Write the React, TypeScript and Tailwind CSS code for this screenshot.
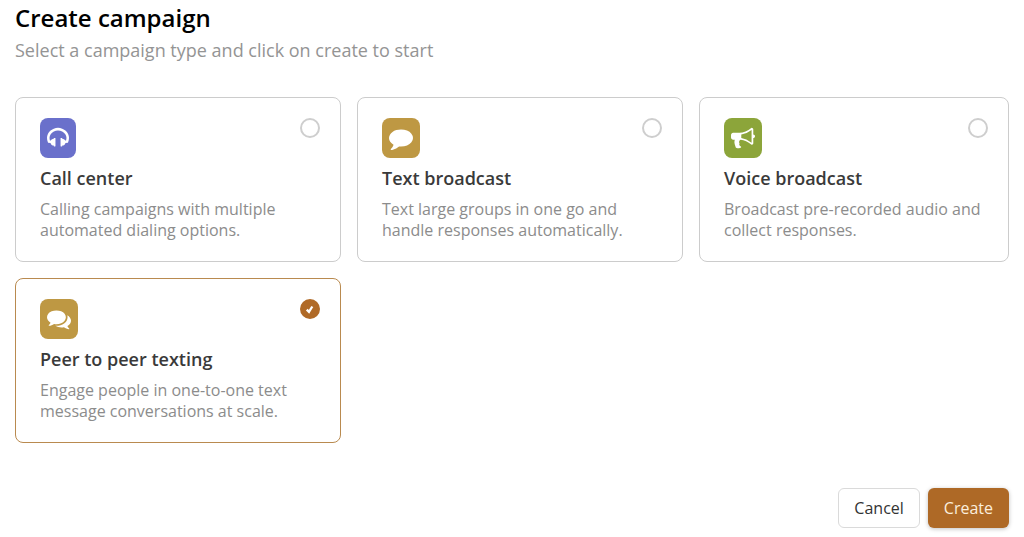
import { useState } from "react";

type Campaign = {
  id: string;
  title: string;
  text: string;
  tile: string;
  viewBox: string;
  glyph: string;
  icon: string;
};

const campaigns: Campaign[] = [
  {
    id: "call-center",
    title: "Call center",
    text: "Calling campaigns with multiple automated dialing options.",
    tile: "bg-[#6a70cb]",
    viewBox: "64 0 1664 1792",
    glyph: "w-[22px]",
    icon: "M1728 886q0 166-60 314l-20 49-185 33q-22 83-90.5 136.5t-156.5 53.5v32q0 14-9 23t-23 9h-64q-14 0-23-9t-9-23v-576q0-14 9-23t23-9h64q14 0 23 9t9 23v32q71 0 130 35.5t93 95.5l68-12q29-95 29-193 0-148-88-279t-236.5-209-315.5-78-315.5 78-236.5 209-88 279q0 98 29 193l68 12q34-60 93-95.5t130-35.5v-32q0-14 9-23t23-9h64q14 0 23 9t9 23v576q0 14-9 23t-23 9h-64q-14 0-23-9t-9-23v-32q-88 0-156.5-53.5t-90.5-136.5l-185-33-20-49q-60-148-60-314 0-151 67-291t179-242.5 266-163.5 320-61 320 61 266 163.5 179 242.5 67 291z",
  },
  {
    id: "text-broadcast",
    title: "Text broadcast",
    text: "Text large groups in one go and handle responses automatically.",
    tile: "bg-[#be9843]",
    viewBox: "0 0 1792 1792",
    glyph: "w-6",
    icon: "M1792 896q0 174-120 321.5t-326 233-450 85.5q-70 0-145-8-198 175-460 242-49 14-114 22-17 2-30.5-9t-17.5-29v-1q-3-4-.5-12t2-10 4.5-9.5l6-9 7-8.5 8-9q7-8 31-34.5t34.5-38 31-39.5 32.5-51 27-59 26-76q-157-89-247.5-220t-90.5-281q0-130 71-248.5t191-204.5 286-136.5 348-50.5q244 0 450 85.5t326 233 120 321.5z",
  },
  {
    id: "voice-broadcast",
    title: "Voice broadcast",
    text: "Broadcast pre-recorded audio and collect responses.",
    tile: "bg-[#8ca53a]",
    viewBox: "0 0 1792 1792",
    glyph: "w-6",
    icon: "M1664 640q53 0 90.5 37.5t37.5 90.5-37.5 90.5-90.5 37.5v384q0 52-38 90t-90 38q-417-347-812-380-58 19-91 66t-31 100.5 40 92.5q-20 33-23 65.5t6 58 33.5 55 48 50 61.5 50.5q-29 58-111.5 83t-168.5 11.5-132-55.5q-7-23-29.5-87.5t-32-94.5-23-89-15-101 3.5-98.5 22-110.5h-122q-66 0-113-47t-47-113v-192q0-66 47-113t113-47h480q435 0 896-384 52 0 90 38t38 90v384zm-128 604v-954q-394 302-768 343v270q377 42 768 341z",
  },
  {
    id: "peer-to-peer",
    title: "Peer to peer texting",
    text: "Engage people in one-to-one text message conversations at scale.",
    tile: "bg-[#be9843]",
    viewBox: "0 0 1792 1792",
    glyph: "w-6",
    icon: "M1408 768q0 139-94 257t-256.5 186.5-353.5 68.5q-86 0-176-16-124 88-278 128-36 9-86 16h-3q-11 0-20.5-8t-11.5-21q-1-3-1-6.5t.5-6.5 2-6l2.5-5 3.5-5.5 4-5 4.5-5 4-4.5q5-6 23-25t26-29.5 22.5-29 25-38.5 20.5-44q-124-72-195-177t-71-224q0-139 94-257t256.5-186.5 353.5-68.5 353.5 68.5 256.5 186.5 94 257zm384 256q0 120-71 224.5t-195 176.5q10 24 20.5 44t25 38.5 22.5 29 26 29.5 23 25q1 1 4 4.5t4.5 5 4 5 3.5 5.5l2.5 5 2 6 .5 6.5-1 6.5q-3 14-13 22t-22 7q-50-7-86-16-154-40-278-128-90 16-176 16-271 0-472-132 58 4 88 4 161 0 309-45t264-129q125-92 192-212t67-254q0-77-23-152 129 71 204 178t75 230z",
  },
];

function CampaignCard({
  campaign,
  selected,
  onSelect,
}: {
  campaign: Campaign;
  selected: boolean;
  onSelect: () => void;
}) {
  return (
    <label
      htmlFor={campaign.id}
      className={`block cursor-pointer rounded-lg border px-6 py-5 ${
        selected ? "border-[#b98a4f]" : "border-[#cccccc]"
      }`}
    >
      <span className="flex items-start justify-between">
        <span className={`flex h-10 items-center rounded-lg px-[7px] ${campaign.tile}`}>
          <svg viewBox={campaign.viewBox} className={`h-6 fill-white ${campaign.glyph}`} aria-hidden="true">
            <path d={campaign.icon} />
          </svg>
        </span>
        <span className="mr-[-4px] grid size-5 place-items-center">
          <input
            id={campaign.id}
            type="radio"
            name="campaign"
            checked={selected}
            onChange={onSelect}
            className="col-start-1 row-start-1 size-5 appearance-none rounded-full border-2 border-[#cecece] bg-white checked:border-[#b06a27] checked:bg-[#b06a27]"
          />
          {selected && (
            <svg viewBox="0 0 20 20" className="pointer-events-none col-start-1 row-start-1 size-5" aria-hidden="true">
              <path d="M6.8 10.6 9 12.9 12.3 7.5" fill="none" stroke="white" strokeWidth="2.3" />
            </svg>
          )}
        </span>
      </span>
      <span className="mt-2 block text-lg leading-[25px] font-semibold text-[#3a3a3a]">{campaign.title}</span>
      <span className="mt-2 block text-base leading-[21px] text-[#8c8c8c]">{campaign.text}</span>
    </label>
  );
}

export default function App() {
  const [selected, setSelected] = useState("peer-to-peer");

  return (
    <main className="bg-white px-[15px] pt-1 pb-2 font-['Open_Sans',sans-serif]">
      <h1 className="text-2xl leading-7 font-semibold text-black">Create campaign</h1>
      <p className="mt-1 text-lg leading-7 text-[#949494]">Select a campaign type and click on create to start</p>
      <form onSubmit={(event) => event.preventDefault()}>
        <div className="mt-[33px] grid grid-cols-[326fr_326fr_310fr] gap-4">
          {campaigns.map((campaign) => (
            <CampaignCard
              key={campaign.id}
              campaign={campaign}
              selected={selected === campaign.id}
              onSelect={() => setSelected(campaign.id)}
            />
          ))}
        </div>
        <div className="mt-[45px] flex justify-end gap-2">
          <button type="button" className="h-10 rounded-md border border-[#dadada] bg-white px-[15px] text-base text-[#333333]">
            Cancel
          </button>
          <button type="submit" className="h-10 rounded-md bg-[#ae6926] px-4 text-base text-[#fbeedd] shadow-[0_1px_4px_rgba(0,0,0,0.25)]">
            Create
          </button>
        </div>
      </form>
    </main>
  );
}
